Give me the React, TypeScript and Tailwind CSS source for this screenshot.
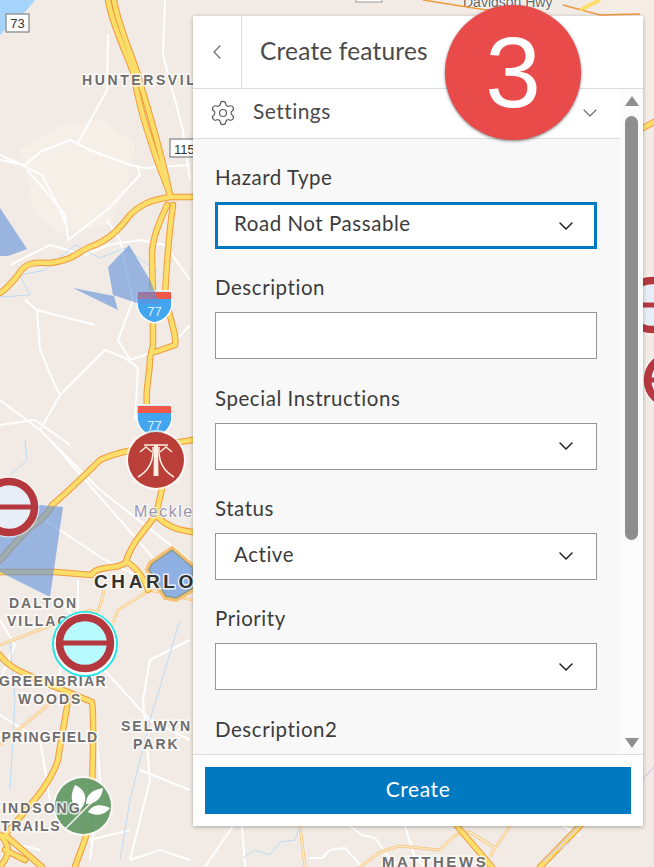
import { ChevronDown, ChevronLeft, Settings } from 'lucide-react'

const fields = [
  { label: 'Hazard Type', value: 'Road Not Passable', kind: 'focused' },
  { label: 'Description', value: '', kind: 'text' },
  { label: 'Special Instructions', value: '', kind: 'select' },
  { label: 'Status', value: 'Active', kind: 'select' },
  { label: 'Priority', value: '', kind: 'select' },
  { label: 'Description2', value: '', kind: 'text' },
]

const whiteRoads = [
  'M0 155 L22 165 L42 175 L60 210 L66 225',
  'M0 160 L25 165 L40 152 L70 140 L90 150 L130 165 L145 168 L190 165',
  'M108 34 L107 90 L78 143',
  'M27 170 L45 190 L65 215 L68 240 L107 210 L140 175 L137 165',
  'M107 220 L120 240 L133 300 L118 340 L130 360 L172 345',
  'M37 310 L40 350 L55 385 L60 395 L40 430',
  'M60 395 L105 350 L125 358 L138 368 L135 420',
  'M10 265 L50 245 L85 255 L108 245 L140 240 L165 245 L190 280',
  'M25 300 L37 310 L95 325',
  'M0 400 L40 430 L100 490 L190 560',
  'M0 425 L35 420 L70 445',
  'M0 490 L60 530 L105 560 L165 590',
  'M50 440 L120 520 L190 600',
  'M165 0 L163 55 L175 100 L183 130 L190 180',
  'M172 345 L190 325',
  'M60 600 L100 650 L60 690 L10 680',
  'M190 640 L150 660 L143 700 L150 780 L130 860',
  'M95 660 L150 720 L190 740',
  'M95 710 L100 780 L90 860',
  'M0 715 L40 740 L50 800',
  'M140 770 L190 790',
  'M0 620 L15 645 L0 680',
  'M78 580 L78 620 L50 700',
  'M130 860 L160 850 L190 860',
  'M60 820 L90 840 L130 830',
  'M0 840 L40 850',
  'M233 826 L205 867',
  'M242 826 L245 867',
  'M350 826 L362 835 L375 838 L390 858 L400 867',
  'M405 826 L415 858 L425 867',
  'M310 858 L322 858 L330 850 L345 848 L362 867',
  'M563 826 L580 836',
]

const blueLines = [
  'M0 297 L30 295 L20 275 L45 270 L75 245 L100 258 L125 248 L158 272',
  'M25 440 L27 460 L10 475',
  'M180 620 L165 670 L150 720 L130 800 L120 860',
  'M10 640 L15 700 L10 790',
  'M300 826 L295 840 L280 842 L270 855 L255 850 L243 858',
]

const highways = [
  'M108 0 C112 25 125 50 133 72 C137 95 145 125 152 145 C158 165 165 180 170 195',
  'M114 0 C118 25 130 50 138 75 C145 100 160 145 170 195',
  'M170 197 C150 200 140 205 130 215 C120 228 110 240 90 247 C80 250 75 260 50 263 C35 262 25 262 18 275 C10 285 5 290 0 293',
  'M170 197 H193',
  'M167 205 C158 225 152 240 152 255 L153 300 V345 L150 358 C150 375 145 390 147 405',
  'M173 205 C170 225 167 260 165 295 C170 320 177 335 175 345 L155 352',
  'M193 440 C160 445 120 450 100 460 C85 475 70 490 52 505 C48 515 35 525 30 527 L0 560',
  'M164 480 L156 515 C145 530 130 545 126 562 C120 570 95 565 92 575 L55 572 H0',
  'M156 515 C165 525 175 530 193 532',
  'M126 562 C135 565 145 580 148 590',
  'M0 655 C10 670 30 675 50 685 L68 692 C70 700 62 730 58 760 C50 785 30 805 5 835 L42 867',
  'M68 692 L92 702 C95 720 92 770 92 800 C92 830 80 850 75 867',
  'M0 835 C15 850 5 860 0 867 M5 850 L25 860',
  'M457 826 L492 867',
  'M580 826 L540 867',
  'M643 128 L654 122',
]

const minorRoads = [
  'M104 590 C100 610 98 615 90 610 L0 645',
  'M193 600 L150 590 L118 610 L112 625',
  'M0 745 L48 705 L60 695',
  'M300 826 L305 867',
  'M510 826 L495 848 L470 832 L455 835 L440 850 L400 846 L380 852 L360 867',
  'M470 832 L495 848 L490 857',
]

const Badge77 = ({ x, y }: { x: number; y: number }) => (
  <g transform={`translate(${x} ${y})`}>
    <path d="M0 0 H34 L35 12 C35 24 26 30 17.500 32 C9 30 0 24 0 12 Z" fill="#42a5f0" stroke="#fff" strokeWidth="1.500" />
    <path d="M1 1 H34 L34.500 8 H0.500 Z" fill="#f0584a" />
    <text x="17.500" y="25" textAnchor="middle" fontSize="13" fill="#dff0fc" fontFamily="Liberation Sans, sans-serif">77</text>
  </g>
)

const NoEntry = ({ x, y, r, fill = '#e8eef8' }: { x: number; y: number; r: number; fill?: string }) => (
  <g>
    <circle cx={x} cy={y} r={r + 1.500} fill="#fff" fillOpacity="0.6" />
    <circle cx={x} cy={y} r={r - 3.500} fill={fill} stroke="#b5383f" strokeWidth="7.500" />
    <rect x={x - r + 1} y={y - 2.500} width={2 * r - 2} height="5" fill="#b5383f" />
  </g>
)

const placeName = 'font-bold tracking-[2px]'

const MapLayer = () => (
  <svg className="absolute inset-0" width="654" height="867" viewBox="0 0 654 867" fontFamily="Liberation Sans, Arial, sans-serif">
    <rect width="654" height="867" fill="#f2ebe5" />
    <path d="M20 150 L60 125 L105 120 L135 145 L125 190 L110 225 L60 232 L35 215 Z" fill="#f6efe8" />
    <path d="M0 0 H35 L25 12 L5 30 L0 35 Z" fill="#a6d4fb" />
    <path d="M540 130 H654 V0 H600 Z" fill="#f4ece5" />
    <g fill="none" stroke="#fff" strokeWidth="2" strokeLinejoin="round">
      {whiteRoads.map((d) => <path key={d} d={d} />)}
    </g>
    <g fill="none" stroke="#bbdcf5" strokeWidth="1">
      {blueLines.map((d) => <path key={d} d={d} />)}
    </g>
    <g fill="none" stroke="#f8c98a" strokeWidth="3" strokeLinejoin="round">
      {minorRoads.map((d) => <path key={d} d={d} />)}
    </g>
    <g fill="none" stroke="#fdeecb" strokeWidth="1.200" strokeLinejoin="round">
      {minorRoads.map((d) => <path key={d} d={d} />)}
    </g>
    <g fill="none" strokeLinejoin="round" strokeLinecap="round">
      <g stroke="#f09a3e" strokeWidth="6.500">
        {highways.map((d) => <path key={d} d={d} />)}
      </g>
      <g stroke="#fbdd6a" strokeWidth="4.500">
        {highways.map((d) => <path key={d} d={d} />)}
      </g>
    </g>
    <path d="M172 548 L193 566 V590 L176 600 L165 598 L147 570 L150 563 Z" fill="#8fb0e2" stroke="#f7c070" strokeWidth="4" />
    <path d="M172 550 L193 568 V588 L176 598 L166 596 L149 570 L152 564 Z" fill="#8fb0e2" stroke="#8c9c8c" strokeWidth="1.500" />
    <Badge77 x={137} y={291} />
    <Badge77 x={137} y={405} />
    <g fill="#5f8fdc" fillOpacity="0.6">
      <path d="M0 208 L27 249 L8 256 L0 256 Z" />
      <path d="M129 245 L108 267 L113 295 L140 304 L160 304 L150 280 Z" />
      <path d="M73 288 L118 310 L114 296 Z" />
      <path d="M0 500 V572 L50 597 L63 507 L40 505 Z" />
    </g>
    <g>
      <circle cx="156" cy="460" r="30" fill="#fff" fillOpacity="0.7" />
      <circle cx="156" cy="460" r="28" fill="#b5332c" fillOpacity="0.94" />
      <g stroke="#fbeee0" fill="none" strokeWidth="1.500">
        <path d="M144 445 H168 M140 452 L146 447 L152 452 M160 452 L166 447 L172 452" />
        <path d="M153 447 C154 460 150 470 138 477 M159 447 C158 460 162 470 174 477" />
      </g>
      <path d="M154 445 H158 L158.500 476 H153.500 Z" fill="#fbeee0" />
    </g>
    <NoEntry x={9} y={507} r={29} />
    <g>
      <circle cx="83" cy="806" r="30" fill="#fff" fillOpacity="0.7" />
      <circle cx="83" cy="806" r="28" fill="#5f9662" fillOpacity="0.92" />
      <path d="M66 828 L98 796" stroke="#fff" strokeWidth="1.500" />
      <path d="M80 810 C70 805 70 795 75 785 C86 790 89 800 80 810 Z M86 804 C86 795 92 790 103 788 C102 798 96 804 86 804 Z M88 812 C92 805 100 803 110 808 C105 815 96 817 88 812 Z" fill="#fff" />
    </g>
    <g paintOrder="stroke" stroke="#fff" strokeOpacity="0.8" strokeWidth="3" fill="#6e6e6e" fontSize="14">
      <text x="82" y="85" className="font-bold tracking-[2.6px]">HUNTERSVILLE</text>
      <text x="9" y="608" className={placeName}>DALTON</text>
      <text x="7" y="626" className={placeName}>VILLAGE</text>
      <text x="-1" y="686" className="font-bold tracking-[1.4px]">GREENBRIAR</text>
      <text x="18" y="704" className={placeName}>WOODS</text>
      <text x="-9" y="742" className="font-bold tracking-[1.2px]">SPRINGFIELD</text>
      <text x="121" y="731" className={placeName}>SELWYN</text>
      <text x="133" y="749" className={placeName}>PARK</text>
      <text x="-13" y="813" className={placeName}>WINDSONG</text>
      <text x="1" y="831" className="font-bold tracking-[1.6px]">TRAILS</text>
      <text x="382" y="867" fontSize="15" className="font-bold tracking-[2.6px]">MATTHEWS</text>
      <text x="134" y="517" fontSize="16" fill="#9a96ad" strokeWidth="2" className="tracking-[1.5px]">Mecklenburg</text>
      <text x="94" y="588" fontSize="19" fill="#333" className="font-bold tracking-[3.6px]">CHARLOTTE</text>
      <text x="463" y="7" fontSize="14" fill="#666" strokeWidth="2">Davidson Hwy</text>
    </g>
    <circle cx="85" cy="644" r="32" fill="#fff" stroke="#22e6e6" strokeWidth="2" />
    <NoEntry x={85} y={643} r={29} fill="#b8fbff" />
    <g>
      <rect x="6" y="14" width="23" height="18" fill="#fff" stroke="#999" strokeWidth="1.500" />
      <text x="17.500" y="28" textAnchor="middle" fontSize="13" fill="#333">73</text>
      <rect x="170" y="139" width="30" height="18" fill="#fff" stroke="#999" strokeWidth="1.500" />
      <text x="174" y="154" fontSize="13" fill="#333">115</text>
      <rect x="356" y="-10" width="26" height="12" fill="#fff" stroke="#999" />
    </g>
    <g fill="none" stroke="#f09a3e" strokeWidth="1.500">
      <path d="M423 0 L467 7 L500 12 M563 5 L600 15 L640 14" />
      <path d="M580 10 L600 0" stroke="#fbdd6a" strokeWidth="4" />
    </g>
    <g fill="none" stroke="#d9d0ea" strokeWidth="1.500">
      <path d="M643 779 L654 767 M579 826 L543 862 M558 850 L570 842" />
    </g>
    <NoEntry x={652} y={305} r={28} />
    <NoEntry x={672} y={380} r={28} />
  </svg>
)

const FormField = ({ label, value, kind }: { label: string; value: string; kind: string }) => (
  <div className="flex flex-col">
    <label className="h-[38px] text-[20.500px] leading-[26px] tracking-[0.55px] text-[#3c3c3c]">{label}</label>
    <div
      className={`flex h-[47px] shrink-0 items-center justify-between bg-white text-[20.500px] tracking-[0.55px] text-[#3c3c3c] ${
        kind === 'focused' ? 'border-[3px] border-[#0079c1] pl-[16px] pr-[16px]' : 'border border-[#959595] pl-[18px] pr-[18px]'
      }`}
    >
      <span className="pb-[4px]">{value}</span>
      {kind !== 'text' && <ChevronDown size={24} strokeWidth={1.500} className="text-[#222]" />}
    </div>
  </div>
)

export default function App() {
  return (
    <div className="relative h-[867px] w-[654px] overflow-hidden font-['Lato',sans-serif]">
      <MapLayer />
      <div className="relative ml-[193px] mt-[16px] flex h-[810px] w-[450px] flex-col bg-white shadow-[0_1px_4px_rgba(0,0,0,0.3)]">
        <div className="flex h-[73px] shrink-0 border-b border-[#dcdcdc]">
          <button className="flex w-[49px] items-center justify-center border-r border-[#dcdcdc] text-[#6a6a6a]">
            <ChevronLeft size={24} strokeWidth={1.200} />
          </button>
          <h1 className="flex items-center pb-[2px] pl-[18px] text-[24.500px] tracking-[0.18px] text-[#4a4a4a]">Create features</h1>
        </div>
        <div className="flex min-h-0 flex-1">
          <div className="flex min-w-0 flex-1 flex-col overflow-hidden bg-[#f8f8f8]">
            <div className="flex h-[50px] shrink-0 items-center justify-between border-b border-[#dcdcdc] bg-white pb-[2px] pl-[16px] pr-[18px]">
              <div className="flex items-center gap-[16px] text-[#5a5a5a]">
                <Settings size={28} strokeWidth={1} />
                <span className="pb-[3px] text-[21px] tracking-[0.45px] text-[#4a4a4a]">Settings</span>
              </div>
              <ChevronDown size={24} strokeWidth={1.100} className="text-[#6a6a6a]" />
            </div>
            <div className="flex flex-col gap-[25.330px] pl-[22px] pr-[23px] pt-[25px]">
              {fields.map((field) => (
                <FormField key={field.label} {...field} />
              ))}
            </div>
          </div>
          <div className="flex w-[23px] shrink-0 flex-col items-center bg-[#fbfbfb] pb-[6px] pt-[7px]">
            <div className="h-0 w-0 border-x-[7px] border-b-[10px] border-x-transparent border-b-[#8e8e8e]" />
            <div className="mt-[10px] h-[424px] w-[13px] rounded-full bg-[#8e8e8e]" />
            <div className="mt-auto h-0 w-0 border-x-[7px] border-t-[10px] border-x-transparent border-t-[#8e8e8e]" />
          </div>
        </div>
        <div className="flex h-[72px] shrink-0 items-start border-t border-[#dcdcdc] bg-white px-[12px] pt-[12px]">
          <button className="h-[47px] w-full bg-[#0079c1] pb-[3px] text-[21px] tracking-[0.6px] text-white">Create</button>
        </div>
      </div>
      <div className="absolute left-[445px] top-[5px] flex h-[135px] w-[136px] items-center justify-center rounded-full bg-[#e94b4b] pb-[2px] text-[100px] leading-none text-white shadow-[0_1px_3px_rgba(0,0,0,0.5)] font-['Liberation_Sans',sans-serif]">
        3
      </div>
    </div>
  )
}
